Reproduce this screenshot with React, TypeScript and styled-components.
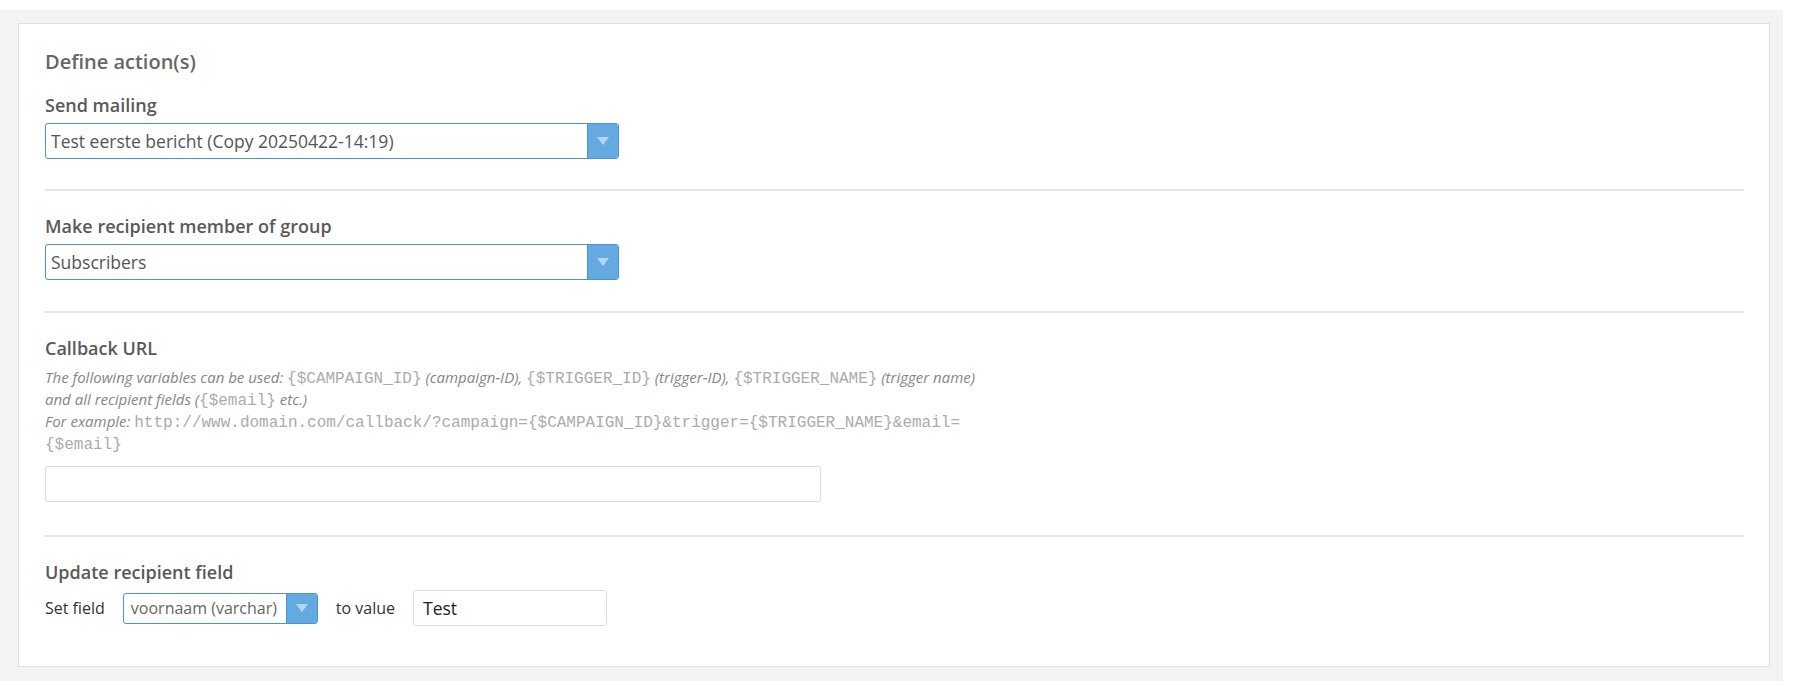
import React from 'react';
import styled, { createGlobalStyle } from 'styled-components';

const GlobalStyle = createGlobalStyle`
  body {
    margin: 0;
    background: #fff;
    font-family: 'Open Sans', 'Liberation Sans', sans-serif;
  }
`;

const Page = styled.div`
  padding-top: 10px;
  width: 1783px;
`;

const Backdrop = styled.div`
  background: #f3f3f3;
  padding: 13px 13px 14px 18px;
`;

const Card = styled.div`
  background: #fff;
  border: 1px solid #e0e0e0;
  padding: 24px 25px 40px 26px;
`;

const Heading = styled.h3`
  margin: 0 0 17px;
  font-size: 20px;
  line-height: 28px;
  font-weight: 600;
  color: #666;
`;

const FieldLabel = styled.div`
  font-size: 18px;
  line-height: 24px;
  font-weight: 600;
  color: #595959;
  margin-bottom: 6px;
`;

const Section = styled.div<{ $pad?: number }>`
  padding-bottom: ${p => p.$pad ?? 30}px;
`;

const Divider = styled.div`
  height: 2px;
  background: #e6e6e6;
  margin-bottom: 23px;
`;

const SelectBox = styled.div<{ $width: number; $height: number }>`
  display: flex;
  align-items: stretch;
  box-sizing: border-box;
  width: ${p => p.$width}px;
  height: ${p => p.$height}px;
  border: 1px solid #4a93d8;
  border-radius: 3px;
  overflow: hidden;
  background: #fff;
`;

const SelectText = styled.span<{ $small?: boolean }>`
  flex: 1;
  display: flex;
  align-items: center;
  padding-left: ${p => (p.$small ? 7 : 5)}px;
  font-size: ${p => (p.$small ? 16 : 17.5)}px;
  color: ${p => (p.$small ? '#666' : '#555')};
  white-space: nowrap;
  overflow: hidden;
`;

const ArrowBox = styled.span`
  width: 30px;
  background: #64aae0;
  border-left: 1px solid #4a93d8;
  display: flex;
  align-items: center;
  justify-content: center;
`;

const Caret = styled.span`
  width: 0;
  height: 0;
  border-left: 6px solid transparent;
  border-right: 6px solid transparent;
  border-top: 8px solid #b3d7f2;
`;

const Help = styled.div`
  font-size: 15px;
  line-height: 22px;
  font-style: italic;
  color: #868686;
`;

const Code = styled.code`
  font-family: 'Liberation Mono', 'Courier New', monospace;
  font-style: normal;
  font-size: 16px;
  line-height: 1;
  color: #ababab;
`;

const TextInput = styled.div<{ $width: number }>`
  box-sizing: border-box;
  width: ${p => p.$width}px;
  height: 36px;
  border: 1px solid #dcdcdc;
  border-radius: 3px;
  background: #fff;
  display: flex;
  align-items: center;
  padding-left: 9px;
  font-size: 17.5px;
  color: #222;
`;

const UrlField = styled(TextInput)`
  margin-top: 12px;
`;

const InlineRow = styled.div`
  display: flex;
  align-items: center;
  gap: 18px;
  margin-top: 3px;
`;

const InlineLabel = styled.span`
  font-size: 16px;
  color: #333;
`;

function Select({ value, width, height = 36, small }: { value: string; width: number; height?: number; small?: boolean }) {
  return (
    <SelectBox $width={width} $height={height}>
      <SelectText $small={small}>{value}</SelectText>
      <ArrowBox>
        <Caret />
      </ArrowBox>
    </SelectBox>
  );
}

export default function App() {
  return (
    <>
      <GlobalStyle />
      <Page>
        <Backdrop>
          <Card>
            <Section>
              <Heading>Define action(s)</Heading>
              <FieldLabel>Send mailing</FieldLabel>
              <Select value="Test eerste bericht (Copy 20250422-14:19)" width={574} />
            </Section>
            <Divider />

            <Section $pad={31}>
              <FieldLabel>Make recipient member of group</FieldLabel>
              <Select value="Subscribers" width={574} />
            </Section>
            <Divider />

            <Section $pad={33}>
              <FieldLabel>Callback URL</FieldLabel>
              <Help>
                The following variables can be used: <Code>{'{$CAMPAIGN_ID}'}</Code> (campaign-ID),{' '}
                <Code>{'{$TRIGGER_ID}'}</Code> (trigger-ID), <Code>{'{$TRIGGER_NAME}'}</Code> (trigger name)
                <br />
                and all recipient fields (<Code>{'{$email}'}</Code> etc.)
                <br />
                For example:{' '}
                <Code>{'http://www.domain.com/callback/?campaign={$CAMPAIGN_ID}&trigger={$TRIGGER_NAME}&email='}</Code>
                <br />
                <Code>{'{$email}'}</Code>
              </Help>
              <UrlField $width={776} />
            </Section>
            <Divider />

            <div>
              <FieldLabel>Update recipient field</FieldLabel>
              <InlineRow>
                <InlineLabel>Set field</InlineLabel>
                <Select value="voornaam (varchar)" width={195} height={31} small />
                <InlineLabel>to value</InlineLabel>
                <TextInput $width={194}>Test</TextInput>
              </InlineRow>
            </div>
          </Card>
        </Backdrop>
      </Page>
    </>
  );
}
